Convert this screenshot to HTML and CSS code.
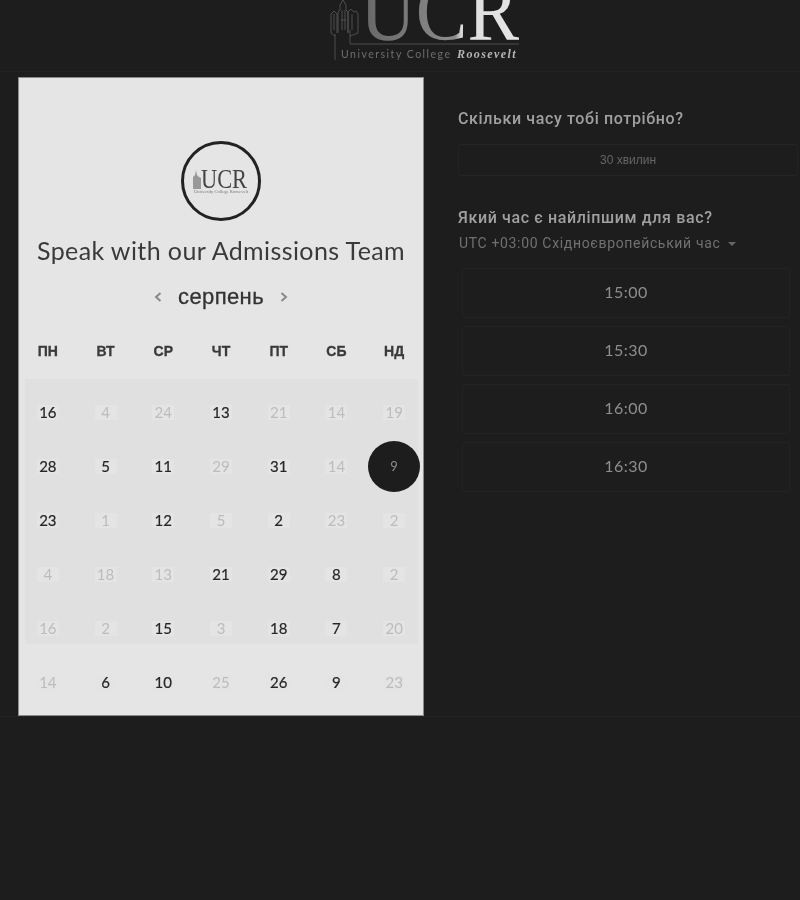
FILE: index.html
```html
<!DOCTYPE html>
<html lang="uk">
<head>
<meta charset="utf-8">
<title>UCR</title>
<link rel="stylesheet" href="styles.css">
</head>
<body>
<header class="top">
  <svg class="logo" width="190" height="72" viewBox="0 0 190 72">
    <defs>
      <linearGradient id="ucrg" x1="0" x2="1" y1="0" y2="0">
        <stop offset="0" stop-color="#666"/>
        <stop offset="0.6" stop-color="#8c8c8c"/>
        <stop offset="0.64" stop-color="#dedede"/>
        <stop offset="1" stop-color="#e4e4e4"/>
      </linearGradient>
    </defs>
    <g class="tower">
      <path d="M5 60V34"/>
      <path d="M1 33V14l3-3 3 3v19M8 33V12l2-2V5l3-5 3 5v5l2 2v21M18 33V12l3-3 3 3 2-1 2 3v19"/>
      <path d="M4 30V14M12 30V10M15 30V10M22 30V14M11 20h5"/>
      <path d="M1 33l4 3M28 33l-8 3M20 30v14h169"/>
    </g>
    <text class="logo-ucr" x="30" y="40" textLength="159" lengthAdjust="spacingAndGlyphs" fill="url(#ucrg)">UCR</text>
    <text class="logo-small" x="11" y="58">University College</text>
    <text class="logo-name" x="127" y="58">Roosevelt</text>
  </svg>
</header>
<main class="page">
  <section class="card">
    <div class="avatar">
      <svg width="60" height="34" viewBox="0 0 60 34">
        <path class="mini-tower" d="M2 25V13l2-2 1-5 1 5 2 2 2 1v11z"/>
        <text class="mini-ucr" x="10" y="24" textLength="46" lengthAdjust="spacingAndGlyphs">UCR</text>
        <text class="mini-small" x="3" y="29" textLength="54" lengthAdjust="spacingAndGlyphs">University College Roosevelt</text>
      </svg>
    </div>
    <h1 class="title">Speak with our Admissions Team</h1>
    <div class="month">
      <svg class="chev" width="10" height="12" viewBox="0 0 10 12"><path d="M7.500 2L3 6l4.500 4"/></svg>
      <span class="month-name">серпень</span>
      <svg class="chev" width="10" height="12" viewBox="0 0 10 12"><path d="M2.500 2L7 6l-4.500 4"/></svg>
    </div>
    <div class="weekdays">
      <span>ПН</span><span>ВТ</span><span>СР</span><span>ЧТ</span><span>ПТ</span><span>СБ</span><span>НД</span>
    </div>
    <div class="days">
      <div class="day on"><span>16</span></div><div class="day off"><span>4</span></div><div class="day off"><span>24</span></div><div class="day on"><span>13</span></div><div class="day off"><span>21</span></div><div class="day off"><span>14</span></div><div class="day off"><span>19</span></div>
      <div class="day on"><span>28</span></div><div class="day on"><span>5</span></div><div class="day on"><span>11</span></div><div class="day off"><span>29</span></div><div class="day on"><span>31</span></div><div class="day off"><span>14</span></div><div class="day selected"><span>9</span></div>
      <div class="day on"><span>23</span></div><div class="day off"><span>1</span></div><div class="day on"><span>12</span></div><div class="day off"><span>5</span></div><div class="day on"><span>2</span></div><div class="day off"><span>23</span></div><div class="day off"><span>2</span></div>
      <div class="day off"><span>4</span></div><div class="day off"><span>18</span></div><div class="day off"><span>13</span></div><div class="day on"><span>21</span></div><div class="day on"><span>29</span></div><div class="day on"><span>8</span></div><div class="day off"><span>2</span></div>
      <div class="day off"><span>16</span></div><div class="day off"><span>2</span></div><div class="day on"><span>15</span></div><div class="day off"><span>3</span></div><div class="day on"><span>18</span></div><div class="day on"><span>7</span></div><div class="day off"><span>20</span></div>
      <div class="day off"><span>14</span></div><div class="day on"><span>6</span></div><div class="day on"><span>10</span></div><div class="day off"><span>25</span></div><div class="day on"><span>26</span></div><div class="day on"><span>9</span></div><div class="day off"><span>23</span></div>
    </div>
  </section>
  <section class="side">
    <h2 class="question">Скільки часу тобі потрібно?</h2>
    <div class="duration">30 хвилин</div>
    <h2 class="question second">Який час є найліпшим для вас?</h2>
    <div class="zone">UTC +03:00 Східноєвропейський час <i class="caret"></i></div>
    <div class="slots">
      <div class="slot">15:00</div>
      <div class="slot">15:30</div>
      <div class="slot">16:00</div>
      <div class="slot">16:30</div>
    </div>
  </section>
</main>
</body>
</html>
```
FILE: styles.css
```css
* { box-sizing: border-box; }
html, body { margin: 0; padding: 0; }
body {
  height: 900px;
  overflow: hidden;
  background: #1d1d1d;
  font-family: "Liberation Sans", Arial, sans-serif;
}
.top {
  height: 72px;
  display: flex;
  justify-content: center;
  padding-left: 50px;
  border-bottom: 1px solid #222;
}
.logo { display: block; filter: blur(0.5px); }
.tower path { fill: none; stroke: #5c5c5c; stroke-width: 0.8; }
.logo-ucr { font-family: "Liberation Serif", serif; font-size: 84px; }
.logo-small { font-family: Lato, sans-serif; font-size: 10.5px; letter-spacing: 1.5px; fill: #6f6f6f; }
.logo-name { font-family: "Liberation Serif", serif; font-size: 12px; font-weight: bold; font-style: italic; letter-spacing: 1.4px; fill: #b5b5b5; }
.page {
  display: flex;
  height: 645px;
  padding: 5px 0 0 18px;
  border-bottom: 1px solid #222;
}
.card {
  width: 406px;
  height: 639px;
  padding-top: 63px;
  background: #e5e5e5;
  border: 1px solid #8a8a8a;
  overflow: hidden;
  display: flex;
  flex-direction: column;
  align-items: center;
  filter: blur(0.35px);
}
.avatar {
  width: 80px;
  height: 80px;
  flex: none;
  border-radius: 50%;
  border: 3px solid #222;
  display: flex;
  align-items: center;
  justify-content: center;
}
.mini-tower { fill: #999; }
.mini-ucr { font-family: "Liberation Serif", serif; font-size: 27px; fill: #444; }
.mini-small { font-family: "Liberation Serif", serif; font-size: 4px; fill: #777; }
.title {
  margin: 13px 0 0;
  font-family: Lato, sans-serif;
  font-size: 25px;
  line-height: 32px;
  font-weight: 400;
  letter-spacing: 0.4px;
  color: #3a3a3a;
  white-space: nowrap;
}
.month {
  margin-top: 15px;
  height: 32px;
  display: flex;
  align-items: center;
  gap: 15px;
}
.month-name { font-size: 22px; letter-spacing: 0.4px; color: #333; -webkit-text-stroke: 0.3px #333; }
.chev path { fill: none; stroke: #8a8a8a; stroke-width: 2; }
.weekdays {
  margin-top: 24px;
  width: 100%;
  height: 28px;
  display: grid;
  grid-template-columns: repeat(7, 1fr);
  align-items: center;
  text-align: center;
  font-size: 14px;
  font-weight: bold;
  color: #3a3a3a;
  -webkit-text-stroke: 0.3px #3a3a3a;
}
.days {
  margin-top: 14px;
  padding-top: 6px;
  width: 100%;
  display: grid;
  grid-template-columns: repeat(7, 1fr);
  grid-auto-rows: 54px;
  background-image: linear-gradient(#e0e0e0, #e0e0e0);
  background-size: 393px 265px;
  background-position: 6px 0;
  background-repeat: no-repeat;
  font-family: Lato, sans-serif;
  font-size: 15px;
}
.day {
  display: flex;
  align-items: center;
  justify-content: center;
}
.day span {
  min-width: 22px;
  padding: 0 2px;
  text-align: center;
  line-height: 15px;
  background: #e4e4e4;
}
.day.on span { color: #262626; -webkit-text-stroke: 0.2px #262626; }
.day.off span { color: #bcbcbc; }
.day.selected {
  width: 52px;
  height: 51px;
  justify-self: center;
  align-self: center;
  border-radius: 50%;
  background: #1d1d1d;
  color: #8c8c8c;
  font-size: 13px;
}
.day.selected span { background: none; }
.side {
  width: 342px;
  margin-left: 34px;
  padding-top: 31px;
  filter: blur(0.3px);
}
.question {
  margin: 0;
  font-family: Roboto, sans-serif;
  font-size: 16px;
  line-height: 22px;
  font-weight: 500;
  letter-spacing: 0.63px;
  color: #a0a0a0;
}
.question.second { margin-top: 31px; }
.duration {
  margin-top: 14px;
  width: 340px;
  height: 32px;
  border: 1px solid #242424;
  border-radius: 3px;
  text-align: center;
  font-size: 12px;
  line-height: 30px;
  color: #666;
}
.zone {
  margin-top: 4px;
  padding-left: 1px;
  font-family: Roboto, sans-serif;
  font-size: 14px;
  line-height: 20px;
  letter-spacing: 0.66px;
  color: #717171;
}
.caret {
  display: inline-block;
  margin-left: 3px;
  vertical-align: 2px;
  border: 4px solid transparent;
  border-top-color: #666;
  border-bottom: 0;
}
.slots {
  margin: 15px 0 0 4px;
  width: 328px;
  display: flex;
  flex-direction: column;
  gap: 8px;
}
.slot {
  height: 50px;
  border: 1px solid #232323;
  border-radius: 3px;
  text-align: center;
  font-family: Lato, sans-serif;
  font-size: 16px;
  line-height: 46px;
  letter-spacing: 0.5px;
  color: #8e8e8e;
}
```
